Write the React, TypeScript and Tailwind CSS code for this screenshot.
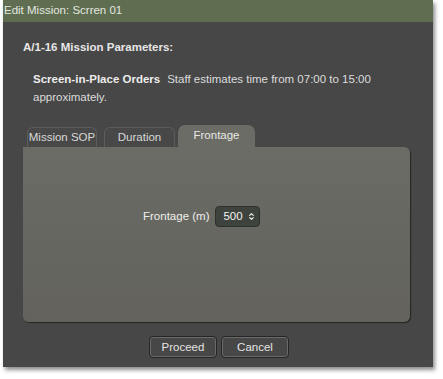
import { ChevronUp, ChevronDown } from "lucide-react";

const font = { fontFamily: '"Liberation Sans", Arial, sans-serif' };

export default function App() {
  return (
    <div className="h-[379px] w-[443px] bg-white" style={font}>
      <div className="ml-[3px] flex h-[367px] w-[430px] flex-col bg-[#474747] shadow-[2px_3px_4px_rgba(0,0,0,0.45)]">
        {/* Title bar */}
        <div className="flex h-[22px] items-center bg-[#5f6e50] pl-[1px] text-[11.5px] text-[#e4e6e0]">
          Edit Mission: Scrren 01
        </div>

        <div className="flex flex-1 flex-col pl-[20px] pr-[20px]">
          <h1 className="mt-[17px] text-[11.5px] font-bold text-[#e6e6e6]">
            A/1-16 Mission Parameters:
          </h1>
          <div className="mt-[14px] pl-[10px] text-[11.5px] leading-[18px] text-[#dcdcdc]">
            <div className="flex whitespace-nowrap">
              <span className="mr-[7px] font-bold text-[#ececec]">Screen-in-Place Orders</span>
              <span>Staff estimates time from 07:00 to 15:00</span>
            </div>
            <div>approximately.</div>
          </div>

          {/* Tabs */}
          <div className="mt-[19px] flex items-end pl-[4px]">
            <Tab label="Mission SOP" className="w-[70px]" />
            <Tab label="Duration" className="ml-[7px] w-[71px]" />
            <div className="ml-[3px] flex h-[22px] w-[77px] items-start justify-center whitespace-nowrap rounded-t-[7px] bg-[#6b6c66] pt-[2px] text-[11.5px] text-[#e8e8e4]">
              Frontage
            </div>
          </div>
          <div className="flex h-[175px] w-[387px] items-start rounded-b-[6px] rounded-tr-[6px] bg-gradient-to-b from-[#6b6c66] to-[#63625d] pl-[120px] pt-[59px] shadow-[1px_1px_1px_rgba(0,0,0,0.5)]">
            <div className="flex items-center gap-[6px] text-[11.5px] text-[#eeeeea]">
              <span className="whitespace-nowrap">Frontage (m)</span>
              <div className="flex h-[21px] w-[45px] items-center justify-between rounded-[4px] border border-[#2e302c] bg-[#3f433d] pl-[7px] pr-[4px] text-[#f0f0f0]">
                <span>500</span>
                <div className="flex flex-col items-center">
                  <ChevronUp className="-mb-[3px] h-[7px] w-[7px]" strokeWidth={4} />
                  <ChevronDown className="h-[7px] w-[7px]" strokeWidth={4} />
                </div>
              </div>
            </div>
          </div>

          {/* Buttons */}
          <div className="mt-[14px] flex justify-center gap-[4px] pl-[2px]">
            <Button label="Proceed" />
            <Button label="Cancel" />
          </div>
        </div>
      </div>
    </div>
  );
}

function Tab({ label, className }: { label: string; className: string }) {
  return (
    <div
      className={`flex h-[20px] items-center justify-center whitespace-nowrap rounded-t-[6px] border border-b-0 border-[#5c5c5c] bg-[#484848] text-[11.5px] text-[#d8d8d8] ${className}`}
    >
      {label}
    </div>
  );
}

function Button({ label }: { label: string }) {
  return (
    <button className="flex h-[22px] w-[68px] items-center justify-center rounded-[4px] border border-[#262626] bg-[#474747] text-[11.5px] text-[#e4e4e4] shadow-[inset_0_0_0_1px_#6a6a6a]">
      {label}
    </button>
  );
}
